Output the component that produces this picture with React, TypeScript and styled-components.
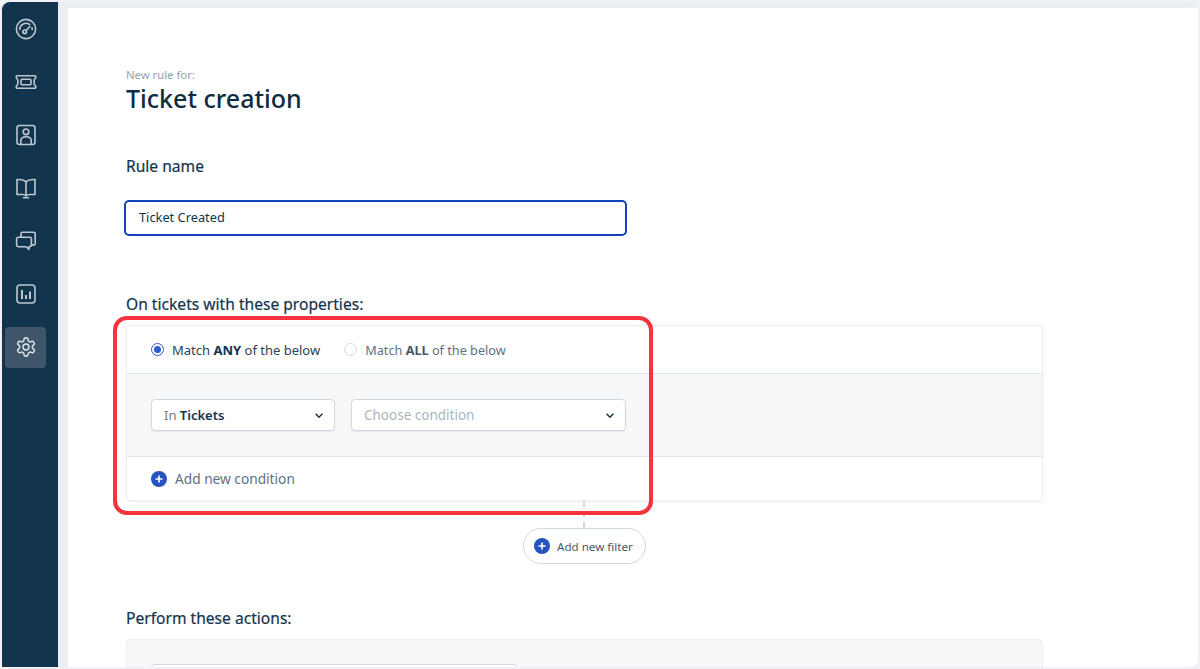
import { ReactNode } from "react";
import styled, { createGlobalStyle } from "styled-components";

const Global = createGlobalStyle`
  html, body {
    margin: 0;
    height: 100%;
    background: #f1f2f8;
    overflow: hidden;
  }
  body {
    font-family: "Noto Sans", "Open Sans", sans-serif;
    color: #12344d;
  }
`;

const S = {
  Shell: styled.div`
    height: 669px;
    box-sizing: border-box;
    padding: 2px;
    display: flex;
    overflow: hidden;
  `,
  Sidebar: styled.nav`
    width: 56px;
    flex: none;
    background: #12344d;
    border-top-left-radius: 8px;
    display: flex;
    flex-direction: column;
    gap: 12px;
    padding: 6.5px 0 0 3px;
    box-sizing: border-box;
  `,
  NavItem: styled.div<{ $active?: boolean }>`
    width: 41px;
    height: 41px;
    border-radius: 4px;
    display: flex;
    align-items: center;
    justify-content: center;
    background: ${(p) => (p.$active ? "#3d566a" : "transparent")};
    svg {
      width: 22px;
      height: 22px;
      fill: none;
      stroke: ${(p) => (p.$active ? "#dfe5ea" : "#bcc8d1")};
      stroke-width: 1.6;
      stroke-linecap: round;
      stroke-linejoin: round;
    }
  `,
  Content: styled.div`
    flex: 1;
    min-width: 0;
    background: #ebeff3;
    padding: 6px 0 0 10px;
    border-top-right-radius: 8px;
    border-bottom-right-radius: 8px;
    overflow: hidden;
  `,
  Main: styled.main`
    position: relative;
    height: 100%;
    background: #fff;
    box-sizing: border-box;
    padding: 60px 0 0 58px;
    overflow: hidden;
    border-bottom-right-radius: 8px;
  `,
  Eyebrow: styled.div`
    font-size: 11.3px;
    line-height: 14px;
    color: #92a2b1;
  `,
  Title: styled.h1`
    margin: 0;
    font-size: 25px;
    line-height: 33px;
    font-weight: 500;
    color: #0e2b40;
  `,
  SectionLabel: styled.div<{ $top: number }>`
    margin-top: ${(p) => p.$top}px;
    font-size: 15.6px;
    line-height: 20px;
    font-weight: 400;
    color: #12344d;
    -webkit-text-stroke: 0.2px #12344d;
  `,
  NameInput: styled.div`
    margin: 24px 0 0 -2px;
    width: 503px;
    height: 36px;
    box-sizing: border-box;
    border: 2px solid #1142b8;
    border-radius: 5px;
    padding: 0 0 2px 13px;
    display: flex;
    align-items: center;
    font-size: 12.8px;
    font-weight: 400;
    color: #12344d;
  `,
  Card: styled.section`
    width: 917px;
    margin-top: 11px;
    box-sizing: border-box;
    border: 1px solid #ebeff3;
    border-radius: 4px;
    box-shadow: 0 1px 3px rgba(18, 52, 77, 0.08);
    background: #fff;
  `,
  MatchRow: styled.div`
    height: 47px;
    box-sizing: border-box;
    padding-left: 24px;
    display: flex;
    align-items: center;
    gap: 24px;
  `,
  MatchOption: styled.label<{ $dim?: boolean }>`
    display: flex;
    align-items: center;
    gap: 8px;
    font-size: ${(p) => (p.$dim ? "12.7px" : "13px")};
    font-weight: 400;
    color: ${(p) => (p.$dim ? "#5d7284" : "#2c4356")};
    b {
      font-weight: 700;
      color: ${(p) => (p.$dim ? "#475867" : "#12344d")};
    }
  `,
  Radio: styled.span<{ $checked?: boolean }>`
    width: 13px;
    height: 13px;
    box-sizing: border-box;
    border-radius: 50%;
    border: 1px solid ${(p) => (p.$checked ? "#2c5cc5" : "#cfd7df")};
    background: #fff;
    display: flex;
    align-items: center;
    justify-content: center;
    &::after {
      content: "";
      width: 7px;
      height: 7px;
      border-radius: 50%;
      background: ${(p) => (p.$checked ? "#2c5cc5" : "transparent")};
    }
  `,
  ConditionRow: styled.div`
    height: 84px;
    box-sizing: border-box;
    background: #f5f7f9;
    border-top: 1px solid #dfe4e9;
    border-bottom: 1px solid #dfe4e9;
    padding: 25px 0 0 24px;
    display: flex;
    gap: 16px;
  `,
  Select: styled.div<{ $width: number }>`
    width: ${(p) => p.$width}px;
    height: 32px;
    box-sizing: border-box;
    background: #fff;
    border: 1px solid #cfd7df;
    border-radius: 4px;
    box-shadow: 0 1px 1px rgba(18, 52, 77, 0.06);
    padding: 0 11px 0 12px;
    display: flex;
    align-items: center;
    justify-content: space-between;
    font-size: 13px;
    color: #6f7c87;
    b {
      font-weight: 600;
      color: #12344d;
    }
    svg {
      width: 8px;
      height: 5px;
      fill: none;
      stroke: #12344d;
      stroke-width: 1.5;
    }
  `,
  Placeholder: styled.span`
    font-size: 13.5px;
    color: #a9b5c0;
  `,
  AddRow: styled.div`
    height: 43px;
    box-sizing: border-box;
    padding-left: 24px;
    display: flex;
    align-items: center;
    gap: 8px;
    font-size: 13.7px;
    color: #5d7284;
  `,
  PlusDot: styled.svg`
    width: 16px;
    height: 16px;
    flex: none;
  `,
  FilterColumn: styled.div`
    width: 917px;
    display: flex;
    flex-direction: column;
    align-items: center;
  `,
  Connector: styled.div`
    width: 0;
    height: 27px;
    margin-right: 1px;
    border-left: 2px dashed #cfd7df;
  `,
  FilterPill: styled.div`
    width: 123px;
    height: 36px;
    box-sizing: border-box;
    border: 1px solid #cfd7df;
    border-radius: 18px;
    background: #fff;
    display: flex;
    align-items: center;
    gap: 7px;
    padding-left: 10px;
    font-size: 11.6px;
    color: #475867;
  `,
  ActionsCard: styled.section`
    width: 917px;
    height: 80px;
    margin-top: 11px;
    box-sizing: border-box;
    background: #f5f7f9;
    border: 1px solid #ebeff3;
    border-radius: 4px;
    padding: 24px 0 0 24px;
  `,
  ActionSelect: styled.div`
    width: 367px;
    height: 32px;
    box-sizing: border-box;
    background: #fff;
    border: 1px solid #cfd7df;
    border-radius: 4px;
  `,
  Highlight: styled.div`
    position: absolute;
    left: 45px;
    top: 308px;
    width: 540px;
    height: 199px;
    box-sizing: border-box;
    border: 4.5px solid #f5333f;
    border-radius: 14px;
    pointer-events: none;
  `,
};

const navIcons: ReactNode[] = [
  // gauge
  <svg viewBox="0 0 22 22" key="gauge">
    <circle cx="11" cy="11" r="9.6" />
    <path d="M4.8 11.5a6.2 6.2 0 0 1 9.8-5" />
    <path d="M17 9.8a6.2 6.2 0 0 1 .2 1.7" />
    <circle cx="9.7" cy="13.8" r="1.8" />
    <path d="M11 12.5l3.8-4" />
  </svg>,
  // ticket
  <svg viewBox="0 0 22 22" key="ticket">
    <path d="M2.2 4.8h17.6c.9 0 1.300.9.9 1.900-.4 1-1.500 1.300-1.500 2.300v4c0 1 1.100 1.300 1.500 2.300.4 1 0 1.900-.9 1.900H2.200c-.9 0-1.300-.9-.9-1.900.4-1 1.500-1.300 1.500-2.300V9c0-1-1.100-1.300-1.500-2.300-.4-1 0-1.900.9-1.900z" />
    <rect x="6" y="8.200" width="10" height="5.600" rx="1.200" />
  </svg>,
  // contact
  <svg viewBox="0 0 22 22" key="contact">
    <rect x="2" y="1.5" width="18" height="19" rx="2.4" />
    <circle cx="11" cy="7.8" r="2.8" />
    <path d="M5.800 20.300v-3.800c0-2.300 2-3.700 5.200-3.700s5.200 1.400 5.200 3.700v3.800" />
  </svg>,
  // book
  <svg viewBox="0 0 22 22" key="book">
    <path d="M11 5C9.500 3.300 7 2.500 3.500 2.500H2v15h5.500c1.600 0 2.800.4 3.500 1.300.7-.9 1.900-1.300 3.500-1.300H20v-15h-1.500C15 2.500 12.500 3.300 11 5z" />
    <path d="M11 5v13.800" />
    <path d="M8.500 20.700h5" />
  </svg>,
  // conversations
  <svg viewBox="0 0 22 22" key="chat">
    <path d="M6 7V3.800c0-.9.7-1.600 1.600-1.600h11c.9 0 1.600.7 1.600 1.600v9.700c0 .9-.7 1.600-1.600 1.600h-2.200" />
    <path d="M3.200 7.300h11.600c.9 0 1.600.7 1.600 1.600v6.200c0 .9-.7 1.600-1.600 1.600h-.9v2.800l-2.600-2.800H3.200c-.9 0-1.600-.7-1.600-1.600V8.900c0-.9.7-1.600 1.600-1.600z" />
  </svg>,
  // analytics
  <svg viewBox="0 0 22 22" key="chart">
    <rect x="2" y="2" width="18" height="18" rx="3" />
    <path d="M7 7v9M11 12v4M15 8.500V16" strokeWidth="2" strokeLinecap="butt" />
  </svg>,
  // admin gear
  <svg viewBox="0 0 24 24" key="gear">
    <path d="M12.220 2h-.440a2 2 0 0 0-2 2v.180a2 2 0 0 1-1 1.730l-.430.250a2 2 0 0 1-2 0l-.150-.080a2 2 0 0 0-2.730.730l-.220.380a2 2 0 0 0 .730 2.730l.150.100a2 2 0 0 1 1 1.720v.510a2 2 0 0 1-1 1.740l-.150.090a2 2 0 0 0-.730 2.730l.220.380a2 2 0 0 0 2.730.730l.150-.080a2 2 0 0 1 2 0l.430.250a2 2 0 0 1 1 1.730V20a2 2 0 0 0 2 2h.440a2 2 0 0 0 2-2v-.180a2 2 0 0 1 1-1.730l.430-.250a2 2 0 0 1 2 0l.150.080a2 2 0 0 0 2.730-.730l.220-.390a2 2 0 0 0-.730-2.730l-.150-.080a2 2 0 0 1-1-1.740v-.500a2 2 0 0 1 1-1.740l.150-.090a2 2 0 0 0 .730-2.730l-.220-.380a2 2 0 0 0-2.730-.730l-.150.080a2 2 0 0 1-2 0l-.430-.250a2 2 0 0 1-1-1.730V4a2 2 0 0 0-2-2z" />
    <circle cx="12" cy="12" r="3.2" />
  </svg>,
];

function PlusIcon() {
  return (
    <S.PlusDot viewBox="0 0 16 16">
      <circle cx="8" cy="8" r="8" fill="#2653c0" />
      <path d="M8 4.500v7M4.500 8h7" stroke="#fff" strokeWidth="1.6" />
    </S.PlusDot>
  );
}

function Chevron() {
  return (
    <svg viewBox="0 0 8 5">
      <path d="M.6.800 4 4.200 7.400.8" />
    </svg>
  );
}

export default function App() {
  return (
    <S.Shell>
      <Global />
      <S.Sidebar>
        {navIcons.map((icon, i) => (
          <S.NavItem key={i} $active={i === navIcons.length - 1}>
            {icon}
          </S.NavItem>
        ))}
      </S.Sidebar>
      <S.Content>
        <S.Main>
          <S.Eyebrow>New rule for:</S.Eyebrow>
          <S.Title>Ticket creation</S.Title>
          <S.SectionLabel $top={41}>Rule name</S.SectionLabel>
          <S.NameInput>Ticket Created</S.NameInput>
          <S.SectionLabel $top={58}>On tickets with these properties:</S.SectionLabel>
          <S.Card>
            <S.MatchRow>
              <S.MatchOption>
                <S.Radio $checked />
                <span>Match <b>ANY</b> of the below</span>
              </S.MatchOption>
              <S.MatchOption $dim>
                <S.Radio />
                <span>Match <b>ALL</b> of the below</span>
              </S.MatchOption>
            </S.MatchRow>
            <S.ConditionRow>
              <S.Select $width={184}>
                <span>In <b>Tickets</b></span>
                <Chevron />
              </S.Select>
              <S.Select $width={275}>
                <S.Placeholder>Choose condition</S.Placeholder>
                <Chevron />
              </S.Select>
            </S.ConditionRow>
            <S.AddRow>
              <PlusIcon />
              Add new condition
            </S.AddRow>
          </S.Card>
          <S.FilterColumn>
            <S.Connector />
            <S.FilterPill>
              <PlusIcon />
              Add new filter
            </S.FilterPill>
          </S.FilterColumn>
          <S.SectionLabel $top={44}>Perform these actions:</S.SectionLabel>
          <S.ActionsCard>
            <S.ActionSelect />
          </S.ActionsCard>
          <S.Highlight />
        </S.Main>
      </S.Content>
    </S.Shell>
  );
}
